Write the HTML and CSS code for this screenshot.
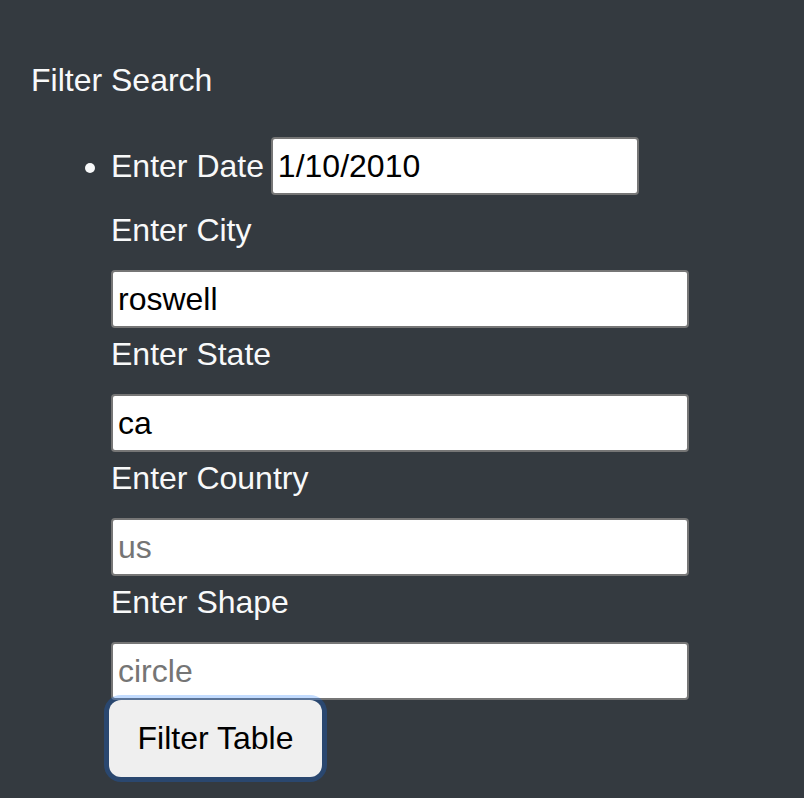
FILE: index.html
```html
<!DOCTYPE html>
<html lang="en">
<head>
<meta charset="utf-8">
<title>Filter Search</title>
<link rel="stylesheet" href="styles.css">
</head>
<body>
<div class="panel">
  <div class="title">Filter Search</div>
  <ul class="filters">
    <li class="filter-item">
      <label class="label-inline" for="date">Enter Date</label>
      <input class="input input-date" id="date" type="text" value="1/10/2010">
      <label class="label label-first" for="city">Enter City</label>
      <input class="input input-wide" id="city" type="text" value="roswell">
      <label class="label" for="state">Enter State</label>
      <input class="input input-wide" id="state" type="text" value="ca">
      <label class="label" for="country">Enter Country</label>
      <input class="input input-wide" id="country" type="text" placeholder="us">
      <label class="label" for="shape">Enter Shape</label>
      <input class="input input-wide" id="shape" type="text" placeholder="circle">
      <button class="btn-filter" type="button">Filter Table</button>
    </li>
  </ul>
</div>
</body>
</html>
```

FILE: styles.css
```css
html, body {
  margin: 0;
  padding: 0;
  background: #343a40;
}

body {
  font-family: "Liberation Sans", Arial, sans-serif;
  font-size: 32px;
  line-height: 37px;
  color: #f8f9fa;
  height: 798px;
  overflow: hidden;
}

.panel {
  padding: 62px 0 0 31px;
}

.title {
  line-height: 37px;
}

.filters {
  margin: 38px 0 0 0;
  padding: 0 0 0 80px;
}

.filter-item {
  list-style: disc;
}

.label-inline {
  margin-right: -2px;
}

.label {
  display: block;
  margin: 8px 0 21px 0;
  line-height: 37px;
}

.label-first {
  margin-top: 17px;
}

.input {
  box-sizing: border-box;
  height: 58px;
  border: 2px solid #767676;
  border-radius: 4px;
  background: #fff;
  color: #000;
  font-family: "Liberation Sans", Arial, sans-serif;
  font-size: 32px;
  line-height: 37px;
  padding: 0 5px;
  margin: 0;
  outline: none;
}

.input::placeholder {
  color: #757575;
}

.input-date {
  width: 368px;
  vertical-align: baseline;
}

.input-wide {
  display: block;
  width: 578px;
}

.btn-filter {
  display: block;
  box-sizing: border-box;
  margin: 0 0 0 -2px;
  height: 77px;
  width: 213px;
  padding: 0 20px;
  border: none;
  border-radius: 12px;
  background: #efefef;
  color: #000;
  font-family: "Liberation Sans", Arial, sans-serif;
  font-size: 32px;
  line-height: 37px;
  box-shadow: 0 0 0 5px rgba(13, 110, 253, 0.25);
  position: relative;
}
```
